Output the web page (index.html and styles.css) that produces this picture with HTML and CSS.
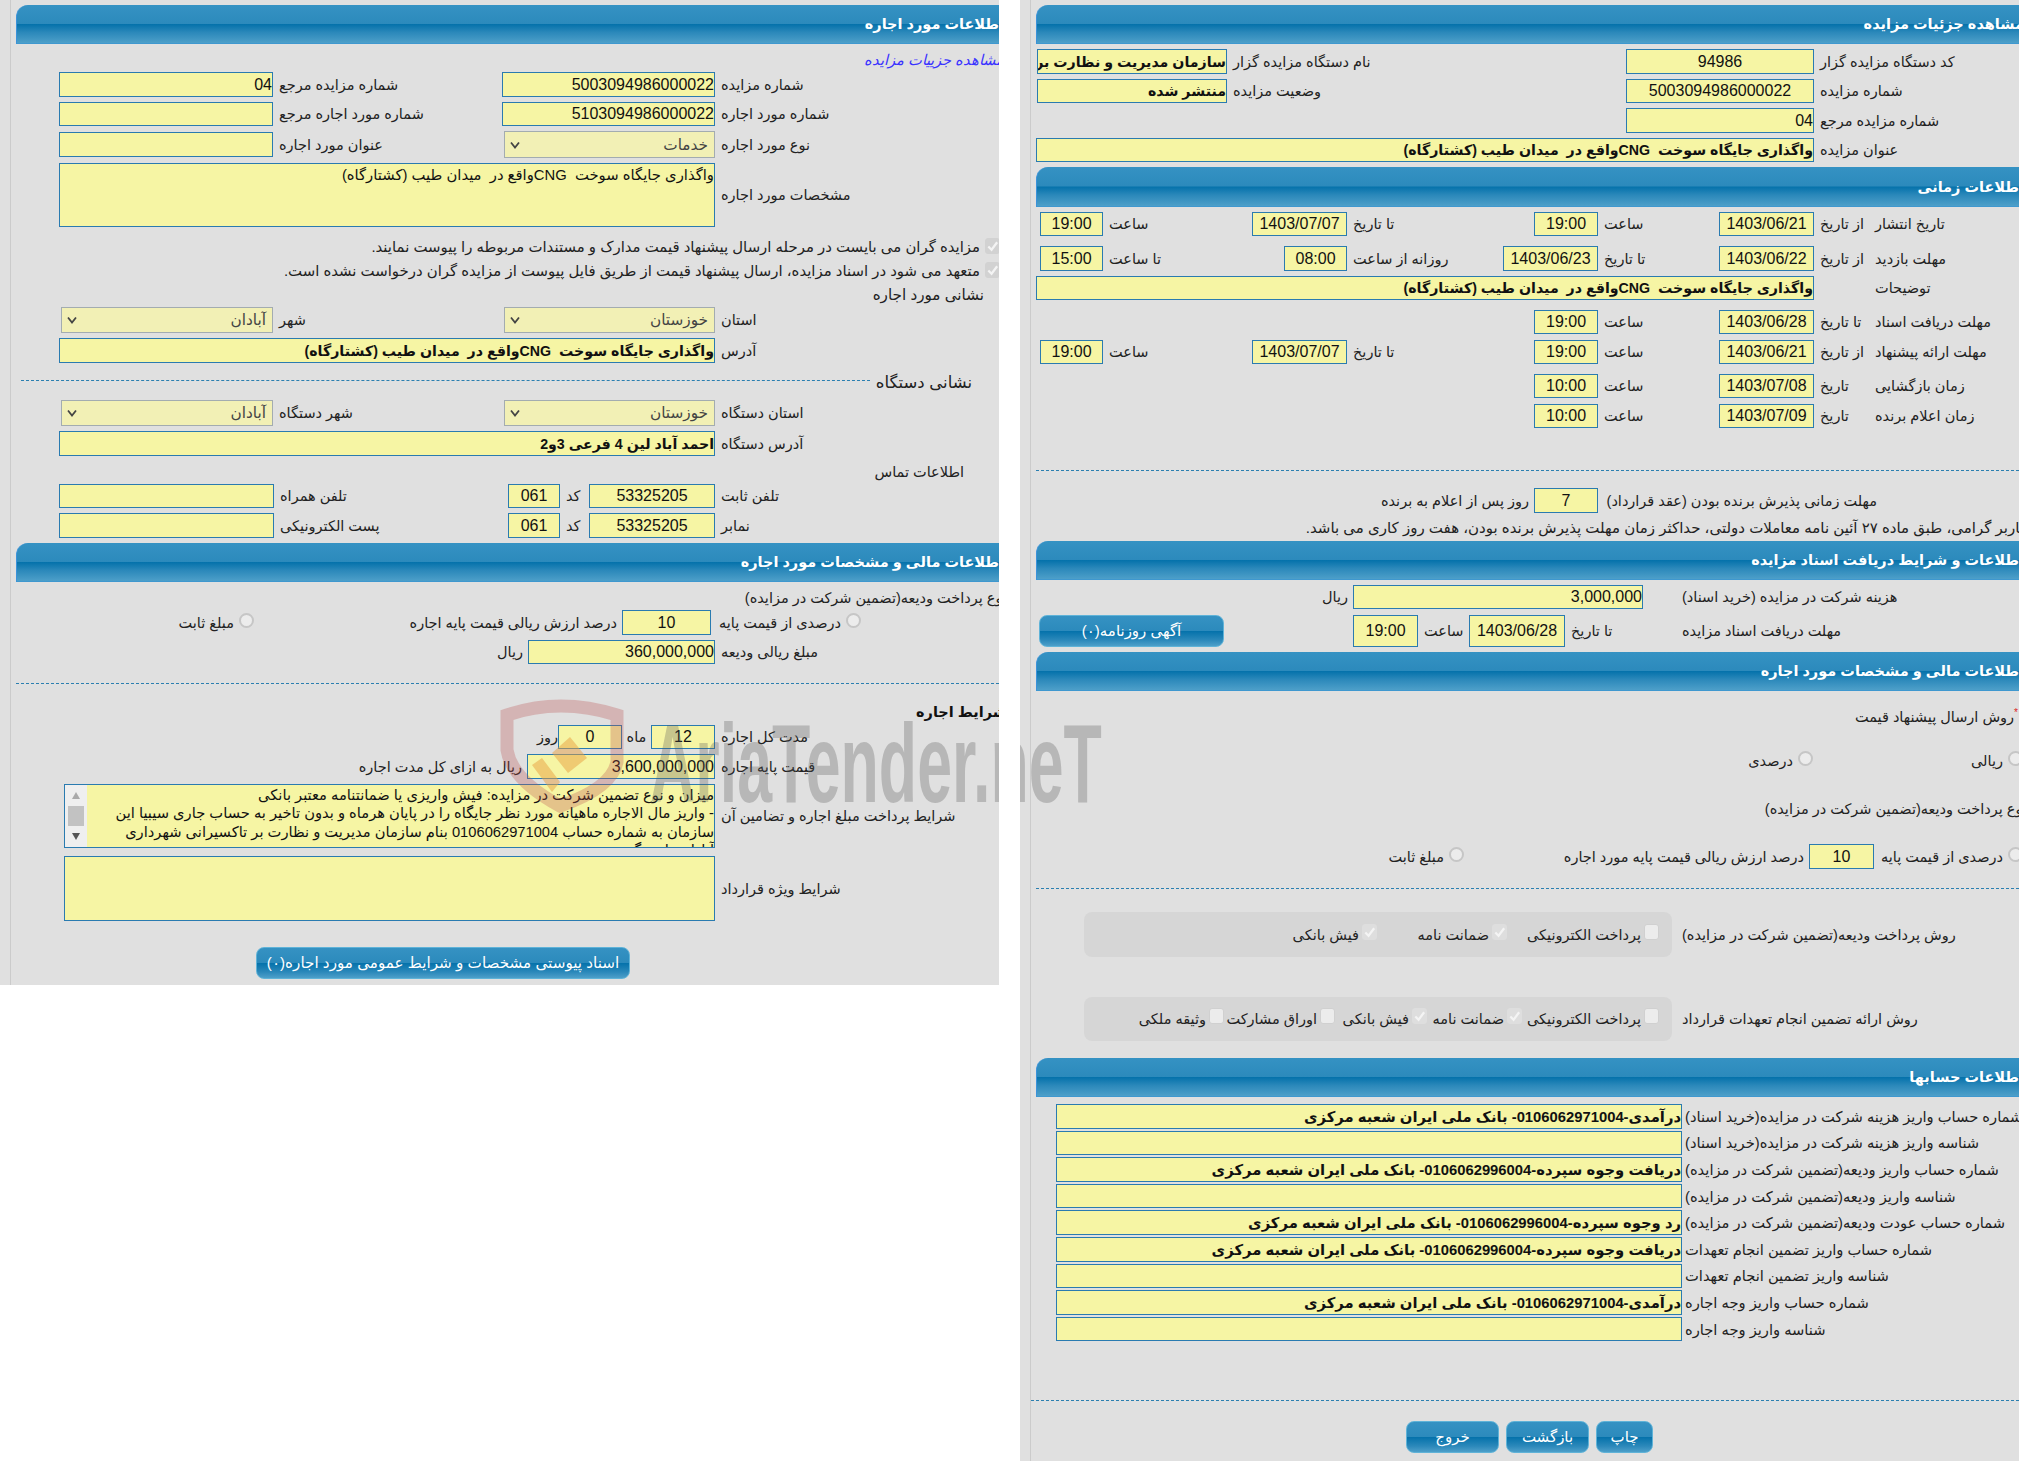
FILE: index.html
```html
<!DOCTYPE html>
<html lang="fa" dir="rtl">
<head>
<meta charset="utf-8">
<title>مشاهده جزئیات مزایده</title>
<link rel="stylesheet" href="styles.css">
</head>
<body>
<svg class="defs" width="0" height="0" aria-hidden="true">
  <symbol id="tick" viewBox="0 0 14 14"><path d="M2.5 7.5 L6 11 L12 3" fill="none" stroke="#f4f4f4" stroke-width="2.4"/></symbol>
  <symbol id="chev" viewBox="0 0 10 8"><path d="M1 1.5 L5 6.5 L9 1.5" fill="none" stroke="#444" stroke-width="1.8"/></symbol>
</svg>
<div class="sheet" dir="ltr">

  <section class="panel" dir="rtl">
    <div class="inner inner-left">
      <h2 class="hd"><span>اطلاعات مورد اجاره</span></h2>
      <div class="row h28"><a class="link">مشاهده جزییات مزایده</a></div>

      <div class="row h25 mb5"><div class="lb w284">شماره مزایده</div><div class="f w213 num">5003094986000022</div><div class="lb w229">شماره مزایده مرجع</div><div class="f w214 num">04</div></div>
      <div class="row h24 mb5"><div class="lb w284">شماره مورد اجاره</div><div class="f w213 num">5103094986000022</div><div class="lb w229">شماره مورد اجاره مرجع</div><div class="f w214"></div></div>
      <div class="row h27 mb5"><div class="lb w284">نوع مورد اجاره</div><div class="sel w211">خدمات<svg class="chev"><use href="#chev"/></svg></div><div class="lb w231">عنوان مورد اجاره</div><div class="f w214 short"></div></div>
      <div class="row h64 mb8"><div class="lb w284">مشخصات مورد اجاره</div><div class="f area w656">واگذاری جایگاه سوخت  CNGواقع در  میدان طیب (کشتارگاه)</div></div>

      <div class="row h24 note"><span class="chk on"><svg><use href="#tick"/></svg></span>مزایده گران می بایست در مرحله ارسال پیشنهاد قیمت مدارک و مستندات مربوطه را پیوست نمایند.</div>
      <div class="row h24 note"><span class="chk on"><svg><use href="#tick"/></svg></span>متعهد می شود در اسناد مزایده، ارسال پیشنهاد قیمت از طریق فایل پیوست از مزایده گران درخواست نشده است.</div>
      <div class="row h24 sub">نشانی مورد اجاره</div>

      <div class="row h26 mb5"><div class="lb w284">استان</div><div class="sel w211">خوزستان<svg class="chev"><use href="#chev"/></svg></div><div class="lb w231">شهر</div><div class="sel w212">آبادان<svg class="chev"><use href="#chev"/></svg></div></div>
      <div class="row h25 mb8"><div class="lb w284">آدرس</div><div class="f w656 bold">واگذاری جایگاه سوخت  CNGواقع در  میدان طیب (کشتارگاه)</div></div>

      <div class="row h24 mb5 legend"><span>نشانی دستگاه</span><i class="legline"></i></div>

      <div class="row h26 mb5"><div class="lb w284">استان دستگاه</div><div class="sel w211">خوزستان<svg class="chev"><use href="#chev"/></svg></div><div class="lb w231">شهر دستگاه</div><div class="sel w212">آبادان<svg class="chev"><use href="#chev"/></svg></div></div>
      <div class="row h25 mb3"><div class="lb w284">آدرس دستگاه</div><div class="f w656 bold">احمد آباد لین 4 فرعی 3و2</div></div>
      <div class="row h25 sub2">اطلاعات تماس</div>

      <div class="row h24 mb5"><div class="lb w284">تلفن ثابت</div><div class="f w126 ctr">53325205</div><div class="lb w29">کد</div><div class="f w52 ctr">061</div><div class="lb w234">تلفن همراه</div><div class="f w215"></div></div>
      <div class="row h25 mb5"><div class="lb w284">نمابر</div><div class="f w126 ctr">53325205</div><div class="lb w29">کد</div><div class="f w52 ctr">061</div><div class="lb w234">پست الکترونیکی</div><div class="f w215"></div></div>

      <h2 class="hd"><span>اطلاعات مالی و مشخصات مورد اجاره</span></h2>

      <div class="row h20 mt6 mb2 clip">نوع پرداخت ودیعه(تضمین شرکت در مزایده)</div>
      <div class="row h25"><span class="radio ml138"></span><div class="lr w135">درصدی از قیمت پایه</div><div class="f w89 ctr">10</div><div class="lr w368">درصد ارزش ریالی قیمت پایه اجاره</div><span class="radio"></span><div class="lr">مبلغ ثابت</div></div>
      <div class="row h24 mt5"><div class="lb w284">مبلغ ریالی ودیعه</div><div class="f w187 num">360,000,000</div><div class="lr">ریال</div></div>
      <hr class="dash mt19">
      <h3 class="tit">شرایط اجاره</h3>
      <div class="row h24 mt3"><div class="lb w284">مدت کل اجاره</div><div class="f w64 ctr">12</div><div class="lc w29">ماه</div><div class="f w64 ctr">0</div><div class="lr tight">روز</div></div>
      <div class="row h25 mt5"><div class="lb w284">قیمت پایه اجاره</div><div class="f w188 num">3,600,000,000</div><div class="lr">ریال به ازای کل مدت اجاره</div></div>
      <div class="row h64 mt5"><div class="lb w284">شرایط پرداخت مبلغ اجاره و تضامین آن</div>
        <div class="f area scr w651">
          <div class="scrolltext">میزان و نوع تضمین شرکت در مزایده: فیش واریزی یا ضمانتنامه معتبر بانکی<br>- واریز مال الاجاره ماهیانه مورد نظر جایگاه را در پایان هرماه و بدون تاخیر به حساب جاری سیبیا این<br>سازمان به شماره حساب 0106062971004 بنام سازمان مدیریت و نظارت بر تاکسیرانی شهرداری<br>آبادان واریز گردد</div>
          <div class="bar"><span class="up"></span><span class="thumb"></span><span class="down"></span></div>
        </div>
      </div>
      <div class="row h65 mt8"><div class="lb w284">شرایط ویژه قرارداد</div><div class="f area w651"></div></div>
      <div class="row btnrow mt26 attach"><a class="btn wide w374">اسناد پیوستی مشخصات و شرایط عمومی مورد اجاره(۰)</a></div>
    </div>
  </section>

  <div class="gap"></div>

  <section class="panel panel-right" dir="rtl">
    <div class="inner">
      <h2 class="hd"><span>مشاهده جزئیات مزایده</span></h2>
      <div class="row h25 mt5"><div class="lb w205">کد دستگاه مزایده گزار</div><div class="f w188 ctr">94986</div><div class="lb w399">نام دستگاه مزایده گزار</div><div class="f w190 bold">سازمان مدیریت و نظارت بر بهره برداری</div></div>
      <div class="row h24 mt5"><div class="lb w205">شماره مزایده</div><div class="f w188 ctr">5003094986000022</div><div class="lb w399">وضعیت مزایده</div><div class="f w190 bold">منتشر شده</div></div>
      <div class="row h25 mt5"><div class="lb w205">شماره مزایده مرجع</div><div class="f w188 num">04</div></div>
      <div class="row h24 mt5 mb5"><div class="lb w205">عنوان مزایده</div><div class="f w778 bold">واگذاری جایگاه سوخت  CNGواقع در  میدان طیب (کشتارگاه)</div></div>

      <h2 class="hd h40"><span>اطلاعات زمانی</span></h2>
      <div class="row h24 mt5"><div class="lb w144 nopad">تاریخ انتشار</div><div class="lb w61">از تاریخ</div><div class="f w95 ctr">1403/06/21</div><div class="lb w121">ساعت</div><div class="f w64 ctr">19:00</div><div class="lb w187">تا تاریخ</div><div class="f w95 ctr">1403/07/07</div><div class="lb w149">ساعت</div><div class="f w63 ctr">19:00</div></div>
      <div class="row h25 mt10"><div class="lb w144 nopad">مهلت بازدید</div><div class="lb w61">از تاریخ</div><div class="f w95 ctr">1403/06/22</div><div class="lb w121">تا تاریخ</div><div class="f w95 ctr">1403/06/23</div><div class="lb w156">روزانه از ساعت</div><div class="f w63 ctr">08:00</div><div class="lb w181">تا ساعت</div><div class="f w63 ctr">15:00</div></div>
      <div class="row h24 mt5"><div class="lb w144 nopad">توضیحات</div><div class="lb w61"></div><div class="f w778 bold">واگذاری جایگاه سوخت  CNGواقع در  میدان طیب (کشتارگاه)</div></div>
      <div class="row h24 mt10"><div class="lb w144 nopad">مهلت دریافت اسناد</div><div class="lb w61">تا تاریخ</div><div class="f w95 ctr">1403/06/28</div><div class="lb w121">ساعت</div><div class="f w64 ctr">19:00</div></div>
      <div class="row h24 mt6"><div class="lb w144 nopad">مهلت ارائه پیشنهاد</div><div class="lb w61">از تاریخ</div><div class="f w95 ctr">1403/06/21</div><div class="lb w121">ساعت</div><div class="f w64 ctr">19:00</div><div class="lb w187">تا تاریخ</div><div class="f w95 ctr">1403/07/07</div><div class="lb w149">ساعت</div><div class="f w63 ctr">19:00</div></div>
      <div class="row h24 mt10"><div class="lb w144 nopad">زمان بازگشایی</div><div class="lb w61">تاریخ</div><div class="f w95 ctr">1403/07/08</div><div class="lb w121">ساعت</div><div class="f w64 ctr">10:00</div></div>
      <div class="row h24 mt6"><div class="lb w144 nopad">زمان اعلام برنده</div><div class="lb w61">تاریخ</div><div class="f w95 ctr">1403/07/09</div><div class="lb w121">ساعت</div><div class="f w64 ctr">10:00</div></div>
      <hr class="dash mt42">
      <div class="row h25 mt17"><div class="lr w421 rr">مهلت زمانی پذیرش برنده بودن (عقد قرارداد)</div><div class="f w64 ctr">7</div><div class="lr">روز پس از اعلام به برنده</div></div>
      <div class="row h20 mt5 clip long">کاربر گرامی، طبق ماده ۲۷ آئین نامه معاملات دولتی، حداکثر زمان مهلت پذیرش برنده بودن، هفت روز کاری می باشد.</div>

      <h2 class="hd mt3"><span>اطلاعات و شرایط دریافت اسناد مزایده</span></h2>
      <div class="row h24 mt5"><div class="lb w376 pl39">هزینه شرکت در مزایده (خرید اسناد)</div><div class="f w290 num">3,000,000</div><div class="lr">ریال</div></div>
      <div class="row h32 mt6"><div class="lb w337 nopad">مهلت دریافت اسناد مزایده</div><div class="lb w117">تا تاریخ</div><div class="f w96 ctr">1403/06/28</div><div class="lb w51">ساعت</div><div class="f w65 ctr">19:00</div><a class="btn w185 end">آگهی روزنامه(۰)</a></div>

      <h2 class="hd mt5"><span>اطلاعات مالی و مشخصات مورد اجاره</span></h2>
      <div class="row h20 mt16 method"><span class="star">*</span>روش ارسال پیشنهاد قیمت</div>
      <div class="row h20 mt24 edge"><span class="radio"></span><div class="lr w195">ریالی</div><span class="radio"></span><div class="lr">درصدی</div></div>
      <div class="row h20 mt28 clip">نوع پرداخت ودیعه(تضمین شرکت در مزایده)</div>
      <div class="row h25 mt25 edge"><span class="radio"></span><div class="lr w134">درصدی از قیمت پایه</div><div class="f w65 ctr">10</div><div class="lr w345">درصد ارزش ریالی قیمت پایه مورد اجاره</div><span class="radio"></span><div class="lr">مبلغ ثابت</div></div>
      <hr class="dash mt19">
      <div class="row h45 mt23"><div class="lb w347 pl10">روش پرداخت ودیعه(تضمین شرکت در مزایده)</div>
        <div class="box w588"><label class="opt w152"><span class="chk"></span>پرداخت الکترونیکی</label><label class="opt w130"><span class="chk on"><svg><use href="#tick"/></svg></span>ضمانت نامه</label><label class="opt"><span class="chk on"><svg><use href="#tick"/></svg></span>فیش بانکی</label></div>
      </div>
      <div class="row h44 mt40"><div class="lb w347 pl10">روش ارائه تضمین انجام تعهدات قرارداد</div>
        <div class="box w588"><label class="opt w137"><span class="chk"></span>پرداخت الکترونیکی</label><label class="opt w95"><span class="chk on"><svg><use href="#tick"/></svg></span>ضمانت نامه</label><label class="opt w92"><span class="chk on"><svg><use href="#tick"/></svg></span>فیش بانکی</label><label class="opt w111"><span class="chk"></span>اوراق مشارکت</label><label class="opt"><span class="chk"></span>وثیقه ملکی</label></div>
      </div>
      <h2 class="hd mt17"><span>اطلاعات حسابها</span></h2>
      <div class="acc">
        <div class="row"><div class="la">شماره حساب واریز هزینه شرکت در مزایده(خرید اسناد)</div><div class="f w626 bold">درآمدی-0106062971004- بانک ملی ایران شعبه مرکزی</div></div>
        <div class="row"><div class="la">شناسه واریز هزینه شرکت در مزایده(خرید اسناد)</div><div class="f w626"></div></div>
        <div class="row"><div class="la">شماره حساب واریز ودیعه(تضمین شرکت در مزایده)</div><div class="f w626 bold">دریافت وجوه سپرده-0106062996004- بانک ملی ایران شعبه مرکزی</div></div>
        <div class="row"><div class="la">شناسه واریز ودیعه(تضمین شرکت در مزایده)</div><div class="f w626"></div></div>
        <div class="row"><div class="la">شماره حساب عودت ودیعه(تضمین شرکت در مزایده)</div><div class="f w626 bold">رد وجوه سپرده-0106062996004- بانک ملی ایران شعبه مرکزی</div></div>
        <div class="row"><div class="la">شماره حساب واریز تضمین انجام تعهدات</div><div class="f w626 bold">دریافت وجوه سپرده-0106062996004- بانک ملی ایران شعبه مرکزی</div></div>
        <div class="row"><div class="la">شناسه واریز تضمین انجام تعهدات</div><div class="f w626"></div></div>
        <div class="row"><div class="la">شماره حساب واریز وجه اجاره</div><div class="f w626 bold">درآمدی-0106062971004- بانک ملی ایران شعبه مرکزی</div></div>
        <div class="row"><div class="la">شناسه واریز وجه اجاره</div><div class="f w626"></div></div>
      </div>
      <hr class="dash dash-wide mt59">
      <div class="row btnrow actions"><a class="btn w57">چاپ</a><a class="btn w83">بازگشت</a><a class="btn w93">خروج</a></div>
    </div>
  </section>

  <div class="mark" dir="ltr" aria-hidden="true">
    <svg class="shield" viewBox="0 0 126 112">
      <path d="M7 15 Q60 -3 117 15 L117 62 Q112 88 60 106 Q12 80 7 50 Z" fill="none" stroke="#b85050" stroke-opacity=".3" stroke-width="13"/>
      <path d="M52 53 L70 37 L87 58 L68 73 Z" fill="#e8a040" fill-opacity=".5"/>
      <path d="M32 65 L42 58 L60 82 L52 92 Z" fill="#e8a040" fill-opacity=".5"/>
    </svg>
    <span class="marktext">AriaTender.neT</span>
  </div>
</div>
</body>
</html>
```
FILE: styles.css
```css
* { box-sizing: border-box; }
html, body { margin: 0; padding: 0; background: #fff; }
body {
  width: 2030px; height: 1461px; overflow: hidden;
  font-family: "Liberation Sans", "DejaVu Sans", sans-serif;
  font-size: 14.5px; color: #222;
}
.defs { position: absolute; }
.sheet { position: relative; display: flex; align-items: flex-start; width: 2030px; }
.panel { background: #e0e0e0; overflow: hidden; flex: none; width: 999px; height: 985px; }
.panel-right { height: 1461px; }
.gap { width: 21px; height: 1461px; background: #fff; position: relative; z-index: 2; flex: none; }
.inner { margin-left: 10px; border-left: 1px solid #cbcbcb; padding-left: 5px; padding-top: 5px; height: 100%; }

.hd {
  margin: 0; height: 39px; display: flex; align-items: center; justify-content: flex-start;
  background: linear-gradient(#3592c3 0, #2c8abc 49%, #0572ab 51%, #2b88ba 72%, #4d9fc9 100%);
  border-left: 1px solid #3a92da; border-bottom: 1px solid #3f98cf;
  border-top-left-radius: 12px;
  color: #fff; font-size: 14.5px; font-weight: bold; white-space: pre;
}
.hd span { margin-right: -5px; }
.h40 { height: 40px; }

.row { display: flex; align-items: center; white-space: pre; }
.h20 { height: 20px; } .h24 { height: 24px; } .h25 { height: 25px; } .h26 { height: 26px; }
.h27 { height: 27px; } .h28 { height: 28px; } .h32 { height: 32px; } .h44 { height: 44px; }
.h45 { height: 45px; } .h64 { height: 64px; } .h65 { height: 65px; }
.mt3 { margin-top: 3px; } .mt5 { margin-top: 5px; } .mt6 { margin-top: 6px; } .mt8 { margin-top: 8px; }
.mt10 { margin-top: 10px; } .mt16 { margin-top: 16px; } .mt17 { margin-top: 17px; }
.mt19 { margin-top: 19px; } .mt23 { margin-top: 23px; } .mt24 { margin-top: 24px; } .mt25 { margin-top: 25px; }
.mt26 { margin-top: 26px; } .mt28 { margin-top: 28px; } .mt40 { margin-top: 40px; } .mt42 { margin-top: 42px; }
.mt59 { margin-top: 59px; }
.mb2 { margin-bottom: 2px; } .mb3 { margin-bottom: 3px; } .mb5 { margin-bottom: 5px; } .mb8 { margin-bottom: 8px; }

.w29 { width: 29px; } .w51 { width: 51px; } .w52 { width: 52px; } .w57 { width: 57px; } .w61 { width: 61px; }
.w63 { width: 63px; } .w64 { width: 64px; } .w65 { width: 65px; } .w83 { width: 83px; } .w89 { width: 89px; }
.w92 { width: 92px; } .w93 { width: 93px; } .w95 { width: 95px; } .w96 { width: 96px; } .w111 { width: 111px; }
.w117 { width: 117px; } .w121 { width: 121px; } .w126 { width: 126px; } .w130 { width: 130px; } .w134 { width: 134px; }
.w135 { width: 135px; } .w137 { width: 137px; } .w144 { width: 144px; } .w149 { width: 149px; } .w152 { width: 152px; }
.w156 { width: 156px; } .w181 { width: 181px; } .w185 { width: 185px; } .w187 { width: 187px; } .w188 { width: 188px; }
.w190 { width: 190px; } .w195 { width: 195px; } .w205 { width: 205px; } .w211 { width: 211px; } .w212 { width: 212px; }
.w213 { width: 213px; } .w214 { width: 214px; } .w215 { width: 215px; } .w229 { width: 229px; } .w231 { width: 231px; }
.w234 { width: 234px; } .w284 { width: 284px; } .w290 { width: 290px; } .w337 { width: 337px; } .w345 { width: 345px; }
.w347 { width: 347px; } .w368 { width: 368px; } .w374 { width: 374px; } .w376 { width: 376px; } .w399 { width: 399px; }
.w421 { width: 421px; } .w588 { width: 588px; } .w626 { width: 626px; } .w651 { width: 651px; } .w656 { width: 656px; }
.w778 { width: 778px; }

.lb { flex: none; display: flex; justify-content: flex-end; padding-left: 6px; }
.nopad { padding-left: 0; }
.lr { flex: none; text-align: right; padding-right: 5px; }
.tight { padding-right: 0; }
.lc { flex: none; text-align: center; }
.la { flex: none; width: 337px; display: flex; justify-content: flex-end; padding-left: 3px; font-size: 14.7px; }
.pl39 { padding-left: 39px; } .pl10 { padding-left: 10px; }
.rr { padding-right: 142px; }

.f {
  flex: none; height: 100%; background: #f6f5a4; border: 1px solid #2a7bb0;
  font-size: 16px; color: #111; overflow: hidden; white-space: pre;
  display: flex; align-items: center; justify-content: flex-start;
}
.num { direction: ltr; justify-content: flex-end; }
.ctr { justify-content: center; }
.bold { font-size: 14.2px; font-weight: bold; }
.acc .bold { font-size: 14.8px; }
.area { align-items: flex-start; font-size: 14.8px; line-height: 20px; padding-top: 1px; }
.short { height: 25px; }

.sel {
  flex: none; height: 100%; background: #f2f0b5; border: 1px solid #a3acb0;
  font-size: 15.3px; color: #444; display: flex; align-items: center; padding: 0 6px 0 5px; justify-content: space-between;
}
.chev { width: 10px; height: 8px; }

.link { color: #3a33ff; font-style: italic; font-size: 14.7px; margin-top: 2px; margin-right: -5px; }
.note { font-size: 14.9px; }
.note .chk { margin: -3px -1px 0 5px; }
.sub { padding-right: 15px; font-size: 15.2px; }
.sub2 { padding-right: 35px; }
.clip { margin-right: -8px; }
.long { font-size: 15px; }
.method { margin-right: 1px; }
.end { margin-right: auto; margin-left: 3px; }
.edge { margin-right: -4px; }
.star { color: #d22; font-size: 10px; align-self: flex-start; }

.chk {
  flex: none; display: inline-block; width: 15px; height: 16px; border-radius: 3px;
  background: #ececec; border: 1px solid #d0d0d0; margin-top: -6px;
}
.chk.on { background: #d2d2d2; border-color: #d2d2d2; }
.box .chk.on { background: #dedede; border-color: #dedede; }
.chk svg { display: block; width: 13px; height: 14px; }
.radio {
  flex: none; display: inline-block; width: 15px; height: 15px; border-radius: 50%;
  background: #ececec; border: 2px solid #c6c6c6; margin-top: -5px;
}
.ml138 { margin-right: 138px; }

.legend { padding-right: 27px; margin-left: 5px; margin-top: -1px; margin-bottom: 6px; font-size: 16.5px; }
.legline { flex: 1; border-top: 1px dashed #2b7fb0; margin: -4px 6px 0 0; }
.dash { border: 0; border-top: 1px dashed #2b7fb0; margin-bottom: 0; margin-left: 0; margin-right: 0; height: 0; }
.dash-wide { margin-left: -5px; }
.tit { margin: 18px -8px 0 0; font-size: 14.5px; font-weight: bold; height: 20px; line-height: 20px; color: #111; }

.scr { padding: 0; line-height: 18.4px; font-size: 14.7px; }
.scrolltext { flex: 1; padding-top: 1px; overflow: hidden; height: 100%; }
.bar { flex: none; width: 22px; height: 100%; background: #efefef; display: flex; flex-direction: column; align-items: center; justify-content: space-between; padding: 7px 0; }
.bar .up { width: 0; height: 0; border: 4px solid transparent; border-top: 0; border-bottom: 7px solid #aaa; }
.bar .thumb { width: 16px; height: 20px; background: #c2c2c2; }
.bar .down { width: 0; height: 0; border: 4px solid transparent; border-bottom: 0; border-top: 7px solid #555; }

.btn {
  flex: none; display: flex; align-items: center; justify-content: center;
  height: 32px; color: #fff; font-size: 15px; border-radius: 8px; border: 1px solid #5fb3d8;
  background: linear-gradient(#3592c3 0, #2c8abc 49%, #0572ab 51%, #2b88ba 80%, #4d9fc9 100%);
}
.wide { font-size: 15.2px; }
.btnrow { height: 32px; }
.attach { padding-right: 369px; }
.actions { gap: 7px; margin-top: 20px; padding-right: 366px; }

.box { flex: none; height: 100%; background: #d6d6d6; border-radius: 8px; display: flex; align-items: center; padding-right: 13px; }
.opt { display: flex; align-items: center; gap: 3px; flex: none; }

.acc { display: grid; grid-auto-rows: 24.6px; row-gap: 2px; margin-top: 7px; }
.acc .f { height: 100%; }

.mark { position: absolute; left: 500px; top: 700px; width: 600px; height: 112px; z-index: 1; pointer-events: none; }
.shield { position: absolute; left: 0; top: 0; width: 126px; height: 112px; overflow: visible; }
.marktext {
  position: absolute; left: 150px; top: 8px; white-space: nowrap;
  font-family: "Liberation Sans Narrow", "Liberation Sans", sans-serif; font-weight: bold; font-size: 112px; line-height: 112px;
  color: rgba(90, 90, 90, .3);
  transform-origin: 0 0; transform: scaleX(.56);
}
```
